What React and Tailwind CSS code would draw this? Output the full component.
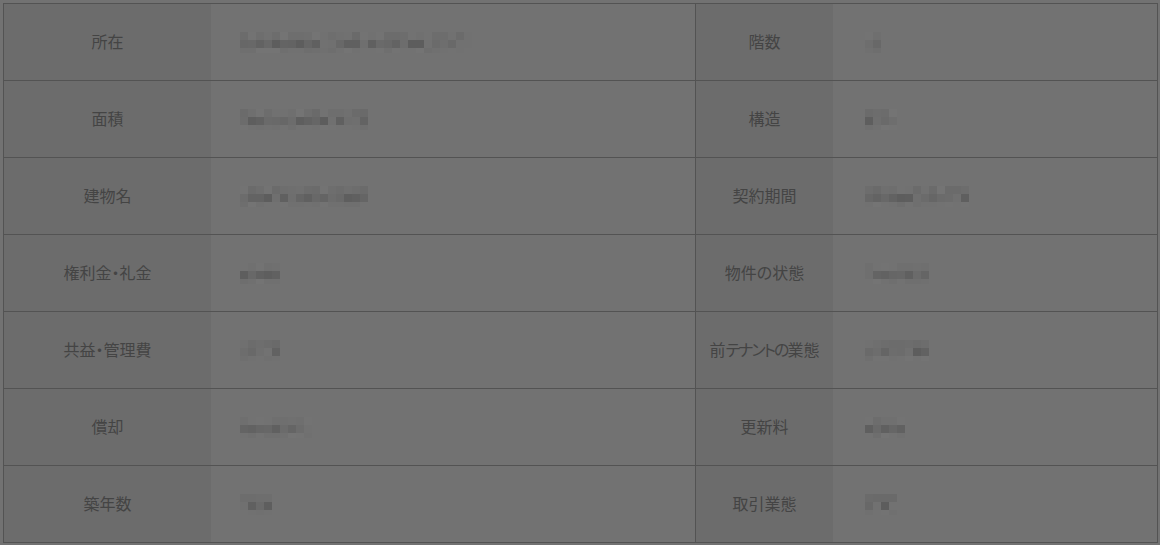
import React from "react";

function rng(seed) {
  let s = seed * 9301 + 49297;
  return () => {
    s = (s * 9301 + 49297) % 233280;
    return s / 233280;
  };
}

function Mosaic({ width, seed }) {
  const cols = Math.max(1, Math.round(width / 8));
  const r = rng(seed);
  const rows = [0, 1, 2];
  return (
    <div className="flex flex-col">
      {rows.map((ri) => (
        <div key={ri} className="flex">
          {Array.from({ length: cols }).map((_, ci) => {
            const v = r();
            let base;
            if (ri === 0) base = 106 + Math.round(v * 10);
            else if (ri === 1) base = 92 + Math.round(v * 22);
            else base = 110 + Math.round(v * 6);
            const h = ri === 2 ? 5 : 8;
            return (
              <div
                key={ci}
                style={{
                  width: 8,
                  height: h,
                  background: `rgb(${base},${base},${base})`,
                }}
              />
            );
          })}
        </div>
      ))}
    </div>
  );
}

const rows = [
  ["所在", 232, "階数", 16],
  ["面積", 128, "構造", 32],
  ["建物名", 128, "契約期間", 100],
  ["権利金・礼金", 38, "物件の状態", 64],
  ["共益・管理費", 40, null, 64],
  ["償却", 72, "更新料", 40],
  ["築年数", 32, "取引業態", 32],
];

export default function App() {
  return (
    <div
      className="w-[1160px] h-[545px] bg-[#727272] pt-[3px] pl-[3px]"
      style={{ fontFamily: '"Noto Sans CJK JP", "Noto Sans", sans-serif' }}
    >
      <div className="w-[1155px] border border-[#535353]">
        {rows.map(([l1, w1, l2, w2], i) => (
          <div
            key={i}
            className={i === 0 ? "flex h-[76px]" : "flex h-[77px] border-t border-[#535353]"}
          >
            <div className="w-[207px] bg-[#6c6c6c] flex items-center justify-center pb-[2px] text-[16px] text-[#444444] [font-feature-settings:'palt']">
              {l1}
            </div>
            <div className="w-[484px] flex items-center pl-[29px]">
              <Mosaic width={w1} seed={i * 7 + 3} />
            </div>
            <div className="w-[138px] border-l border-[#535353] bg-[#6c6c6c] flex items-center justify-center pb-[2px] text-[16px] text-[#444444] [font-feature-settings:'palt']">
              {l2 === null ? (
                <span>
                  前<span className="tracking-[-2px]">テナントの</span>業態
                </span>
              ) : (
                l2
              )}
            </div>
            <div className="flex-1 flex items-center pl-[32px]">
              <Mosaic width={w2} seed={i * 11 + 5} />
            </div>
          </div>
        ))}
      </div>
    </div>
  );
}
